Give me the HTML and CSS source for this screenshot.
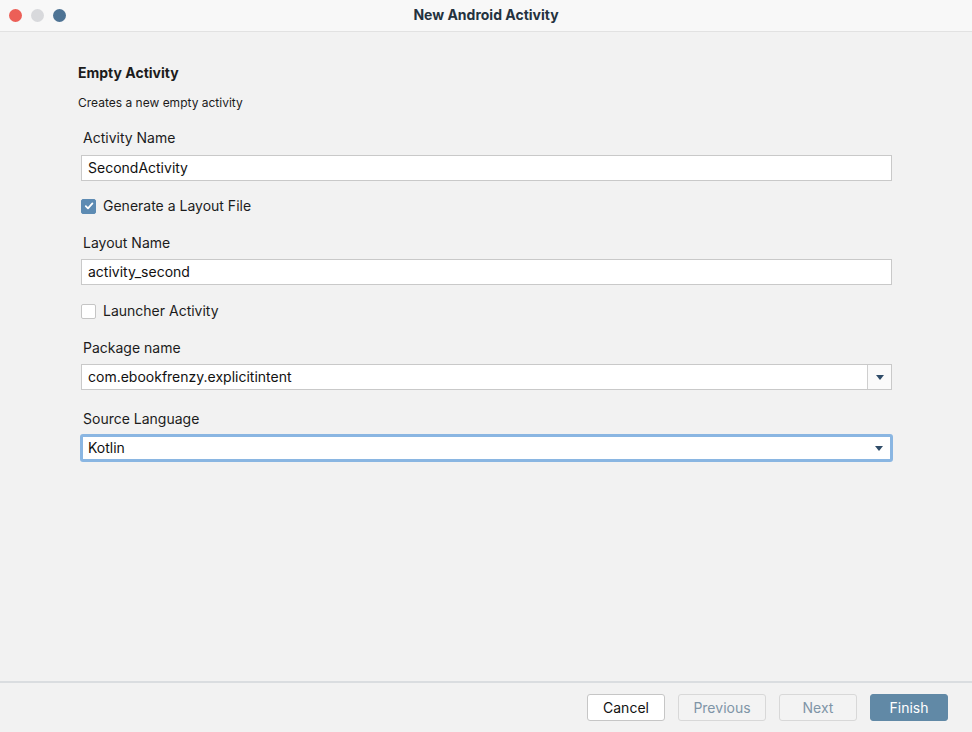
FILE: index.html
```html
<!DOCTYPE html>
<html>
<head>
<meta charset="utf-8">
<link rel="stylesheet" href="styles.css">
</head>
<body>
<div class="window">
  <div class="titlebar">
    <div class="lights">
      <span class="light red"></span>
      <span class="light gray"></span>
      <span class="light blue"></span>
    </div>
    <div class="title">New Android Activity</div>
  </div>
  <div class="content">
    <div class="heading">Empty Activity</div>
    <div class="desc">Creates a new empty activity</div>
    <div class="form">
      <div class="group g-activity">
        <div class="label">Activity Name</div>
        <div class="input">SecondActivity</div>
      </div>
      <div class="check c-generate">
        <span class="box checked">
          <svg width="10" height="10" viewBox="0 0 10 10"><path d="M1.8 5.2 L4 7.4 L8.4 2.4" fill="none" stroke="#fff" stroke-width="1.8" stroke-linecap="round" stroke-linejoin="round"/></svg>
        </span>
        <span class="check-text">Generate a Layout File</span>
      </div>
      <div class="group g-layout">
        <div class="label">Layout Name</div>
        <div class="input">activity_second</div>
      </div>
      <div class="check c-launcher">
        <span class="box"></span>
        <span class="check-text">Launcher Activity</span>
      </div>
      <div class="group g-package">
        <div class="label">Package name</div>
        <div class="combo">
          <div class="combo-text">com.ebookfrenzy.explicitintent</div>
          <div class="combo-btn"><span class="arrow"></span></div>
        </div>
      </div>
      <div class="group g-source">
        <div class="label">Source Language</div>
        <div class="select">
          <div class="combo-text">Kotlin</div>
          <div class="select-btn"><span class="arrow"></span></div>
        </div>
      </div>
    </div>
  </div>
  <div class="footer">
    <button class="btn cancel">Cancel</button>
    <button class="btn disabled prev">Previous</button>
    <button class="btn disabled next">Next</button>
    <button class="btn primary">Finish</button>
  </div>
</div>
</body>
</html>
```
FILE: styles.css
```css
html, body {
  margin: 0;
  padding: 0;
  width: 972px;
  height: 732px;
  overflow: hidden;
  background: #f2f2f2;
  font-family: Inter, "Liberation Sans", sans-serif;
  color: #1c1c1c;
}
.window {
  width: 972px;
  height: 732px;
  display: flex;
  flex-direction: column;
  background: #f2f2f2;
}
.titlebar {
  height: 31px;
  border-bottom: 1px solid #e2e2e2;
  background: #f8f8f8;
  display: flex;
  align-items: center;
  position: relative;
  flex-shrink: 0;
}
.lights {
  display: flex;
  gap: 9px;
  padding-left: 9px;
}
.light {
  width: 13px;
  height: 13px;
  border-radius: 50%;
  display: block;
}
.red { background: #ec5f57; }
.gray { background: #d8d9dc; }
.blue { background: #4e7394; }
.title {
  position: absolute;
  left: 0;
  right: 0;
  top: 0;
  height: 31px;
  line-height: 30px;
  text-align: center;
  font-size: 14px;
  font-weight: 700;
  color: #24323e;
  pointer-events: none;
}
.content {
  flex: 1;
  padding: 32px 80px 0 78px;
}
.heading {
  font-size: 14px;
  font-weight: 700;
  line-height: 18px;
  color: #1c1c1c;
}
.desc {
  font-size: 12px;
  line-height: 16px;
  margin-top: 13px;
  color: #1c1c1c;
}
.form {
  padding-left: 3px;
  margin-top: 18px;
}
.label {
  font-size: 14px;
  line-height: 18px;
  padding-left: 2px;
  color: #1c1c1c;
  margin-bottom: 8px;
}
.input {
  height: 24px;
  border: 1px solid #c9c9c9;
  background: #fff;
  font-size: 14px;
  line-height: 24px;
  padding-left: 6px;
  color: #111;
}
.check {
  display: flex;
  align-items: center;
  height: 18px;
  font-size: 14px;
  line-height: 18px;
}
.c-generate { margin-top: 16px; }
.g-layout { margin-top: 19px; }
.g-layout .label { margin-bottom: 7px; }
.c-launcher { margin-top: 17px; }
.g-package { margin-top: 19px; }
.g-package .label { margin-bottom: 7px; }
.g-source { margin-top: 20px; }
.box {
  width: 13px;
  height: 13px;
  border: 1px solid #c5c5c5;
  background: #fff;
  border-radius: 2px;
  display: flex;
  align-items: center;
  justify-content: center;
  margin-right: 7px;
}
.box.checked {
  background: #5d8bb3;
  border-color: #5d8bb3;
}
.check-text { color: #1c1c1c; }
.combo {
  height: 24px;
  border: 1px solid #c9c9c9;
  background: #fff;
  display: flex;
}
.combo-text {
  flex: 1;
  font-size: 14px;
  line-height: 24px;
  padding-left: 6px;
  color: #111;
}
.combo-btn {
  width: 23px;
  border-left: 1px solid #cfcfcf;
  display: flex;
  align-items: center;
  justify-content: center;
  background: #fafafa;
}
.arrow {
  width: 0;
  height: 0;
  border-left: 4px solid transparent;
  border-right: 4px solid transparent;
  border-top: 5px solid #2f4c68;
}
.g-source .label { margin-bottom: 6px; }
.select {
  height: 22px;
  border: 3px solid #8ab6e2;
  border-radius: 3px;
  background: #fff;
  display: flex;
  margin-left: -1px;
  margin-right: -1px;
}
.select .combo-text {
  line-height: 22px;
  padding-left: 5px;
}
.select-btn {
  width: 22px;
  display: flex;
  align-items: center;
  justify-content: center;
}
.footer {
  box-sizing: border-box;
  height: 51px;
  border-top: 2px solid #dadde0;
  display: flex;
  justify-content: flex-end;
  align-items: flex-start;
  padding-right: 24px;
  padding-top: 11px;
  gap: 13px;
  flex-shrink: 0;
}
.btn {
  height: 27px;
  font-family: Inter, "Liberation Sans", sans-serif;
  font-size: 14px;
  border-radius: 3px;
  padding: 0;
  margin: 0;
}
.cancel {
  width: 78px;
  background: #fff;
  border: 1px solid #c6c6c6;
  color: #111;
}
.disabled {
  background: #f3f3f3;
  border: 1px solid #d8d8d8;
  color: #7f95a7;
}
.prev { width: 88px; }
.next { width: 78px; }
.primary {
  width: 78px;
  background: #6189a6;
  border: 1px solid #6189a6;
  color: #fff;
}
```
